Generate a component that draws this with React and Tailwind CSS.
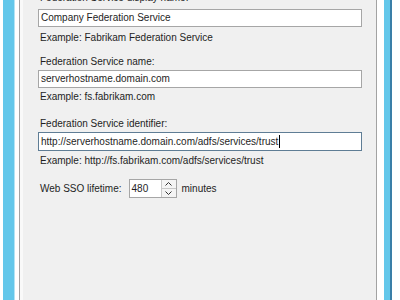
export default function App() {
  const font = { fontFamily: '"Liberation Sans", Arial, sans-serif' };
  return (
    <div className="w-[400px] h-[300px] bg-white flex overflow-hidden text-[10px] text-[#1e1e1e]" style={font}>
      <div className="w-[3px] shrink-0 bg-white" />
      <div className="w-[11px] shrink-0 bg-[#63c7ea]" />
      <div className="w-[1px] shrink-0 bg-[#b3e4f5]" />
      <div className="w-[4px] shrink-0 bg-white" />
      <div className="w-[1px] shrink-0 bg-[#a3a3a3]" />
      <div className="w-[3px] shrink-0 bg-[#f9f9f9]" />
      <div className="flex-1 bg-[#f0f0f0] pl-[15px] pr-[14px] flex flex-col">
        <div className="mt-[-9px] leading-[14px] pl-[2px]">Federation Service display name:</div>
        <div className="mt-[4px] h-[18px] border border-[#a6a6a6] bg-white pl-[2px] leading-[16px]">Company Federation Service</div>
        <div className="mt-[4px] leading-[14px] pl-[2px]">Example: Fabrikam Federation Service</div>
        <div className="mt-[10px] leading-[14px] pl-[2px]">Federation Service name:</div>
        <div className="mt-[1px] h-[18px] border border-[#a6a6a6] bg-white pl-[2px] leading-[16px]">serverhostname.domain.com</div>
        <div className="mt-[2px] leading-[14px] pl-[2px]">Example: fs.fabrikam.com</div>
        <div className="mt-[13px] leading-[14px] pl-[2px]">Federation Service identifier:</div>
        <div className="mt-[1px] h-[19px] border border-[#5f7d95] bg-white pl-[2px] leading-[17px] flex items-center">
          <span>http://serverhostname.domain.com/adfs/services/trust</span>
          <span className="w-[1px] h-[13px] bg-black ml-[1px]" />
        </div>
        <div className="mt-[3px] leading-[14px] pl-[2px]">Example: http://fs.fabrikam.com/adfs/services/trust</div>
        <div className="mt-[11px] flex items-center pl-[2px]">
          <span className="leading-[14px]">Web SSO lifetime:</span>
          <div className="ml-[7px] w-[48px] h-[19px] border border-[#a6a6a6] bg-white flex">
            <div className="flex-1 pl-[2px] leading-[17px]">480</div>
            <div className="w-[15px] flex flex-col border-l border-[#c8c8c8]">
              <div className="flex-1 flex items-center justify-center border-b border-[#c8c8c8] bg-[#f4f4f4]">
                <svg width="7" height="4" viewBox="0 0 7 4"><path d="M0.5 3.5 L3.5 0.5 L6.5 3.5" fill="none" stroke="#333" strokeWidth="1" /></svg>
              </div>
              <div className="flex-1 flex items-center justify-center bg-[#f4f4f4]">
                <svg width="7" height="4" viewBox="0 0 7 4"><path d="M0.5 0.5 L3.5 3.5 L6.5 0.5" fill="none" stroke="#333" strokeWidth="1" /></svg>
              </div>
            </div>
          </div>
          <span className="ml-[5px] leading-[14px]">minutes</span>
        </div>
      </div>
      <div className="w-[1px] shrink-0 bg-[#a3a3a3]" />
      <div className="w-[7px] shrink-0 bg-white" />
      <div className="w-[6px] shrink-0 bg-[#63c7ea]" />
      <div className="w-[2px] shrink-0 bg-[#3a7fa8]" />
      <div className="w-[8px] shrink-0 bg-white" />
    </div>
  );
}
